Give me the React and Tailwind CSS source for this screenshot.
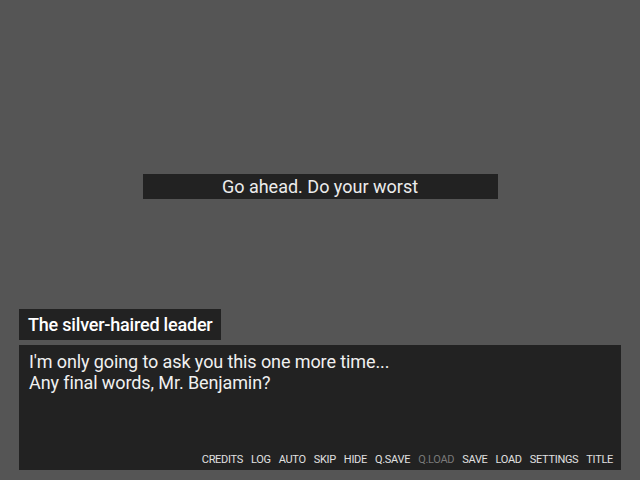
import React from 'react'

const menuItems = [
  { label: 'CREDITS' },
  { label: 'LOG' },
  { label: 'AUTO' },
  { label: 'SKIP' },
  { label: 'HIDE' },
  { label: 'Q.SAVE' },
  { label: 'Q.LOAD', disabled: true },
  { label: 'SAVE' },
  { label: 'LOAD' },
  { label: 'SETTINGS' },
  { label: 'TITLE' }
]

function QuickMenu () {
  return (
    <div className="flex justify-end gap-[8px] pr-[8px] pb-[4px] text-[11px] leading-[13px] tracking-[-0.3px]">
      {menuItems.map(item => (
        <button
          key={item.label}
          className={item.disabled ? 'text-[#7a7a7a]' : 'text-[#e0e0e0] hover:text-white'}
        >
          {item.label}
        </button>
      ))}
    </div>
  )
}

export default function App () {
  return (
    <div className="h-[480px] w-[640px] bg-[#555555] flex flex-col font-['Roboto','Liberation_Sans',sans-serif]">
      {/* 旁白 */}
      <div className="mt-[174px] mx-auto w-[355px] h-[25px] bg-[#222222] text-center text-[#ececec] text-[18px] leading-[25px]">
        Go ahead. Do your worst
      </div>

      <div className="mt-auto px-[19px] pb-[10px]">
        {/* 角色名 */}
        <div className="w-[202px] h-[31px] bg-[#222222] pl-[9px] text-white text-[18px] font-medium leading-[31px] tracking-[-0.2px]">
          The silver-haired leader
        </div>

        {/* 对话框 */}
        <div className="mt-[5px] h-[125px] bg-[#222222] flex flex-col justify-between">
          <p className="pt-[6px] pl-[10px] text-[#f0f0f0] text-[18px] leading-[21px] tracking-[-0.1px]">
            I'm only going to ask you this one more time...<br />
            Any final words, Mr. Benjamin?
          </p>
          <QuickMenu />
        </div>
      </div>
    </div>
  )
}
